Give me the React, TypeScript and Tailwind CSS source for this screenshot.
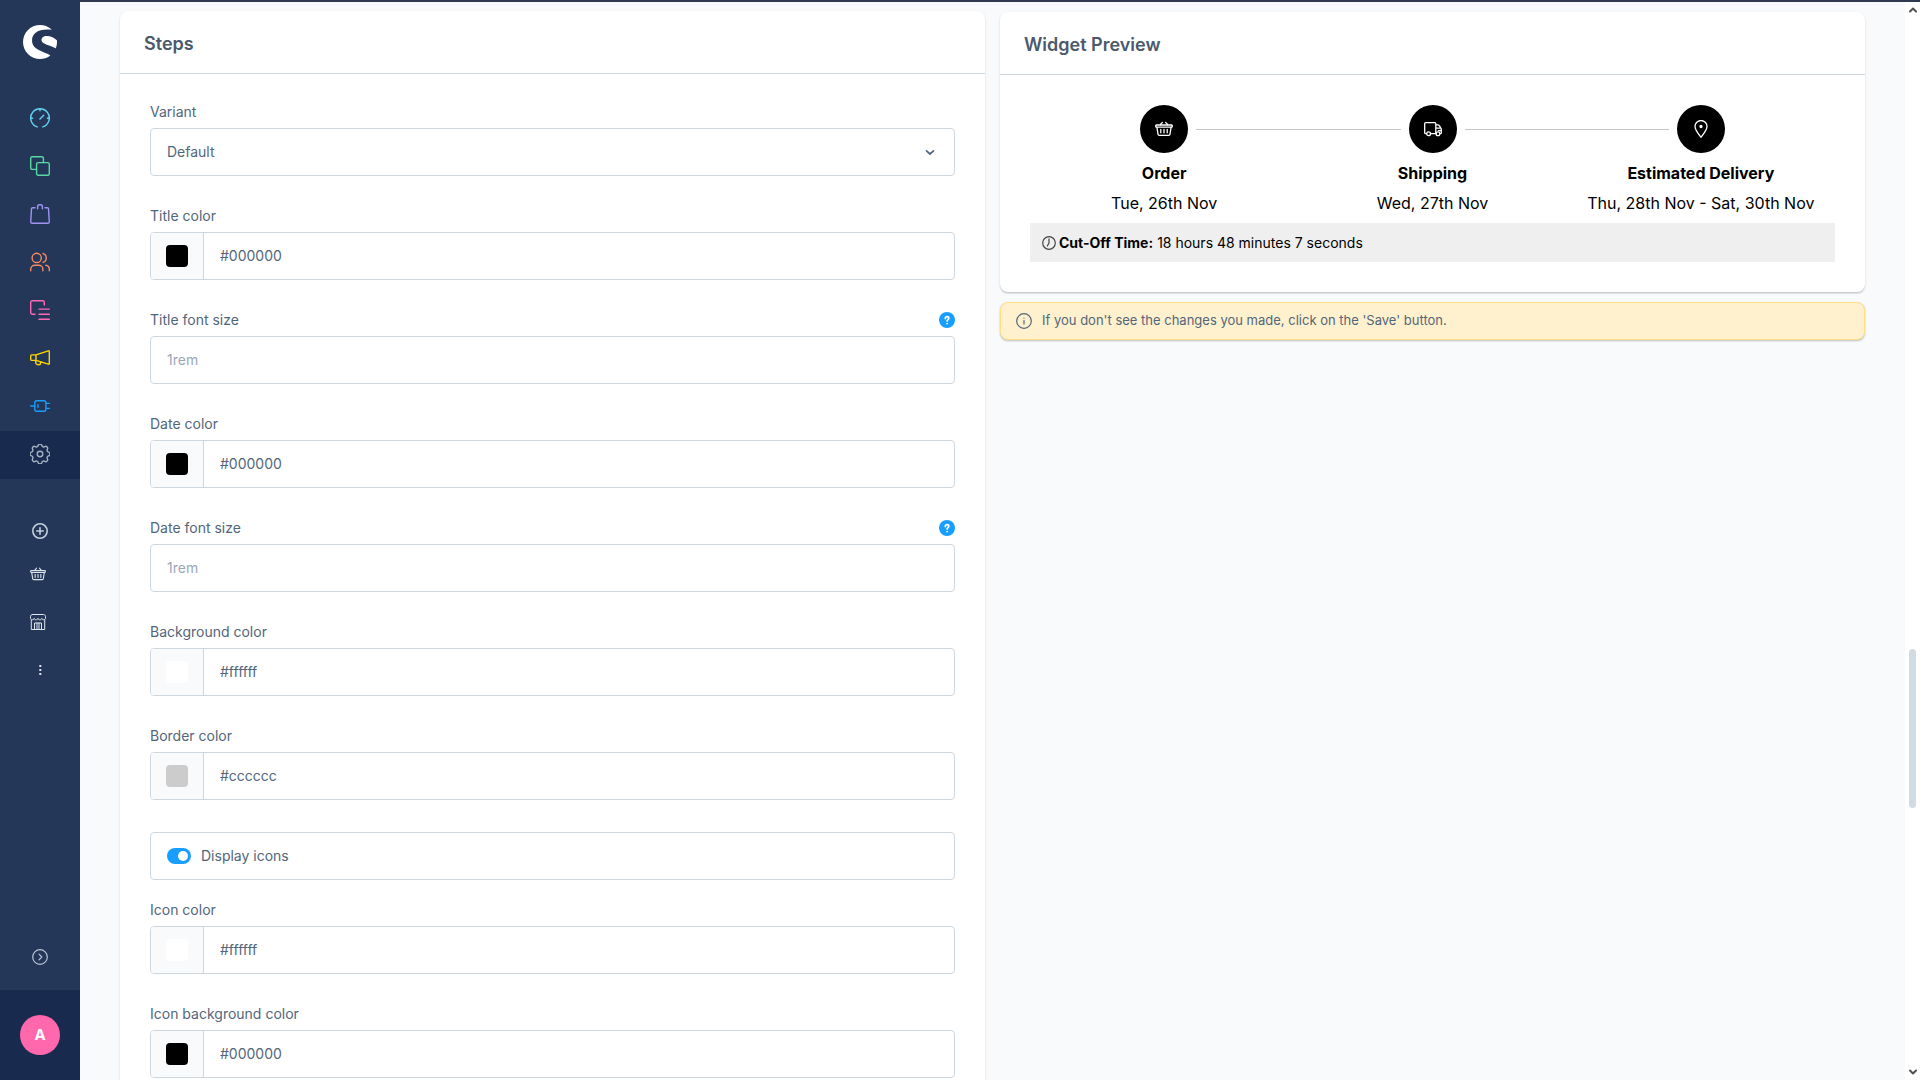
import { useState, type ReactNode } from "react";
import { SiShopware } from "react-icons/si";

function Icon({ children, className = "size-5", stroke = 1.4, box = "0 0 20 20" }: { children: ReactNode; className?: string; stroke?: number; box?: string }) {
  return (
    <svg viewBox={box} className={className} fill="none" stroke="currentColor" strokeWidth={stroke} strokeLinecap="round" strokeLinejoin="round" aria-hidden="true">
      {children}
    </svg>
  );
}

const BasketPaths = () => (
  <>
    <path d="M1.6 5h14.8c.6 0 1 .4.9 1l-.1.5c-.1.400-.4.700-.8.700H1.600c-.4 0-.7-.3-.8-.7L.7 6c-.1-.6.300-1 .9-1Z" />
    <path d="M1.900 7.200 3 14.200c.1.700.6 1.100 1.200 1.100h9.600c.6 0 1.100-.4 1.200-1.100l1.100-7" />
    <path d="M5.200 4.800 7.400 2.400M12.800 4.800l-2.200-2.400M5.800 9.400v3.400M9 9.400v3.400M12.200 9.400v3.400" />
  </>
);

const navItems = [
  {
    label: "Dashboard",
    color: "text-[#64d2f0]",
    icon: <path d="M7.300 18.900A9.300 9.300 0 1 1 12.700 18.900M10 1v1.800M1 10.300h1.600M17.400 10.300H19M10 11l3.700-3.700" />,
  },
  {
    label: "Catalogues",
    color: "text-[#57d9a3]",
    icon: (
      <>
        <path d="M6.500 13.400H2.200A1.500 1.500 0 0 1 .7 11.900V2.200A1.500 1.500 0 0 1 2.200.7h9.700a1.500 1.500 0 0 1 1.500 1.500v4.300" />
        <rect x="6.600" y="6.600" width="12.700" height="12.700" rx="1.500" />
      </>
    ),
  },
  {
    label: "Orders",
    color: "text-[#a092f0]",
    icon: <path d="M5 3.700H2.700c-.7 0-1.200.5-1.200 1.200L.7 17.800c0 .9.600 1.500 1.500 1.500h15.600c.9 0 1.500-.6 1.500-1.500l-.8-12.900c0-.7-.5-1.200-1.200-1.200H15M7.600 4.800V2.700c0-1.100.8-2 1.800-2h1.200c1 0 1.800.9 1.800 2v2.100" />,
  },
  {
    label: "Customers",
    color: "text-[#f88962]",
    icon: (
      <>
        <circle cx="6.700" cy="5.900" r="4.600" />
        <path d="M.7 18.700v-1.500a4 4 0 0 1 4-4h4.200a4 4 0 0 1 4 4v1.500M13 1.500a4.600 4.600 0 0 1 0 8.800M15.800 13.300a4 4 0 0 1 3.500 4v1.400" />
      </>
    ),
  },
  {
    label: "Content",
    color: "text-[#ff68b4]",
    icon: <path d="M5 14.300H2.400A1.700 1.700 0 0 1 .7 12.600V2.400A1.700 1.700 0 0 1 2.400.7h10.200a1.700 1.700 0 0 1 1.700 1.700v2.600M9 9.100h10.300M9 14.200h10.300M9 19.200h10.300" />,
  },
  {
    label: "Marketing",
    color: "text-[#ffd700]",
    icon: <path d="M6 6.900 18.300 2.800c.6-.2 1 .2 1 .7v12c0 .6-.4.900-1 .7L6 12.400M1.700 6.900H6v5.500H1.700c-.6 0-1-.4-1-1V7.900c0-.6.4-1 1-1ZM5.700 12.600v1.800c0 1.100.7 1.900 1.700 2.100l1.200.2c1 .2 1.800-.5 1.900-1.400l.1-1.200" />,
  },
  {
    label: "Extensions",
    color: "text-[#189eff]",
    icon: <path d="M.7 10H4.800M6.500 4.700h7.400a2 2 0 0 1 2 2v6.600a2 2 0 0 1-2 2H6.500a1.700 1.700 0 0 1-1.700-1.700V6.400a1.700 1.700 0 0 1 1.700-1.700ZM16 7.400h3.300M16 12.400h3.300M8 8.700v2.600" />,
  },
  {
    label: "Settings",
    color: "text-[#a3b2c2]",
    active: true,
    icon: (
      <g transform="translate(-3.330 -3.330) scale(1.111)">
        <path strokeWidth="1.250" d="M10.325 4.317c.426-1.756 2.924-1.756 3.350 0a1.724 1.724 0 0 0 2.573 1.066c1.543-.94 3.310.826 2.370 2.370a1.724 1.724 0 0 0 1.065 2.572c1.756.426 1.756 2.924 0 3.350a1.724 1.724 0 0 0-1.066 2.573c.94 1.543-.826 3.310-2.370 2.370a1.724 1.724 0 0 0-2.572 1.065c-.426 1.756-2.924 1.756-3.350 0a1.724 1.724 0 0 0-2.573-1.066c-1.543.94-3.310-.826-2.370-2.370a1.724 1.724 0 0 0-1.065-2.572c-1.756-.426-1.756-2.924 0-3.350a1.724 1.724 0 0 0 1.066-2.573c-.94-1.543.826-3.310 2.370-2.370 1 .608 2.296.070 2.572-1.065Z" />
        <circle cx="12" cy="12" r="2.500" strokeWidth="1.250" />
      </g>
    ),
  },
];

function Sidebar() {
  return (
    <aside className="flex w-20 shrink-0 flex-col bg-[#243758]">
      <a href="#home" aria-label="Home" className="mt-6 flex h-9 items-center justify-center text-white">
        <SiShopware className="size-[34px]" />
      </a>
      <nav aria-label="Main" className="mt-[35px] flex flex-col">
        {navItems.map((n) => (
          <a key={n.label} href={"#" + n.label.toLowerCase()} aria-label={n.label} className={"flex h-12 items-center justify-center pb-0.5 " + n.color + (n.active ? " bg-[#182b4e]" : "")}>
            <Icon>{n.icon}</Icon>
          </a>
        ))}
      </nav>
      <div className="mt-7 flex flex-col">
        <button aria-label="Add" className="flex h-12 items-center justify-center text-[#c3cfdd]">
          <Icon className="size-4" stroke={1.6} box="0 0 16 16">
            <circle cx="8" cy="8" r="7.200" />
            <path d="M8 4.800v6.400M4.800 8h6.400" />
          </Icon>
        </button>
        <a href="#cart" aria-label="Basket" className="flex h-10 items-center pb-0.5 pl-[30px] text-[#dfe5ec]">
          <Icon className="size-4" stroke={1.200} box="0 0 18 18">
            <BasketPaths />
          </Icon>
        </a>
        <a href="#store" aria-label="Storefront" className="mt-1 flex h-12 items-center pb-0.5 pl-[30px] text-[#dfe5ec]">
          <Icon className="size-4" stroke={1} box="0 0 16 16">
            <path d="M2.500.5h11c1.200 0 2 .8 2 2v1.800c0 .9-.8 1.500-1.800 1.500s-1.900-.6-1.900-1.500c0 .9-.9 1.500-1.900 1.500S8 5.200 8 4.300c0 .9-.9 1.500-1.900 1.500s-1.900-.6-1.900-1.500c0 .9-.9 1.500-1.900 1.500S.5 5.200.5 4.300V2.500c0-1.200.8-2 2-2ZM1.300 6v9.500h13.400V6M4.500 15.500V9h7v6.500M7 9v6.500M9 9v6.500" />
          </Icon>
        </a>
        <button aria-label="More" className="flex h-12 items-center justify-center pb-0.5 text-[#dfe5ec]">
          <svg viewBox="0 0 16 16" className="size-4" fill="currentColor" aria-hidden="true">
            <rect x="7.300" y="3" width="2" height="2" />
            <rect x="7.300" y="7" width="2" height="2" />
            <rect x="7.300" y="11" width="2" height="2" />
          </svg>
        </button>
      </div>
      <button aria-label="Expand menu" className="mt-auto flex h-[66px] items-center justify-center text-[#b8c4d3]">
        <Icon className="size-4" stroke={1.200} box="0 0 16 16">
          <circle cx="8" cy="8" r="7.300" />
          <path d="m7 5.200 2.800 2.800L7 10.800" />
        </Icon>
      </button>
      <button aria-label="User menu" className="flex h-[90px] items-center justify-center bg-[#182b4e]">
        <span className="flex size-10 items-center justify-center rounded-full bg-[#ff68ac] text-[15px] font-bold text-white">A</span>
      </button>
    </aside>
  );
}

function HelpBadge({ topic }: { topic: string }) {
  return (
    <button aria-label={"Help: " + topic} className="flex size-4 items-center justify-center rounded-full bg-[#189eff]">
      <Icon className="size-4 text-white" stroke={1.700} box="0 0 16 16">
        <path d="M6.300 6.400c0-1 .8-1.700 1.800-1.700s1.700.6 1.700 1.600c0 1.200-1.700 1.300-1.700 2.700M8.100 11.500v.1" />
      </Icon>
    </button>
  );
}

const box = "flex h-12 items-center rounded border border-[#cdd7e0] bg-white";

function Field({ id, label, help, children }: { id: string; label: string; help?: boolean; children: ReactNode }) {
  return (
    <div className="mb-8">
      <div className="mb-2 flex h-4 items-center justify-between">
        <label htmlFor={id} className="leading-4">{label}</label>
        {help && <HelpBadge topic={label} />}
      </div>
      {children}
    </div>
  );
}

function ColorField({ id, label, value }: { id: string; label: string; value: string }) {
  return (
    <Field id={id} label={label}>
      <div className={box + " overflow-hidden"}>
        <div className="flex w-[53px] items-center justify-center self-stretch border-r border-[#cdd7e0] bg-[#f9fafc]">
          <button aria-label={"Pick " + label.toLowerCase()} className="size-[22px] rounded" style={{ backgroundColor: value }} />
        </div>
        <input id={id} defaultValue={value} className="min-w-0 flex-1 self-stretch px-4 outline-none" />
      </div>
    </Field>
  );
}

function TextField({ id, label, placeholder }: { id: string; label: string; placeholder: string }) {
  return (
    <Field id={id} label={label} help>
      <div className={box}>
        <input id={id} placeholder={placeholder} className="min-w-0 flex-1 self-stretch px-4 outline-none placeholder:text-[#9aa8b8]" />
      </div>
    </Field>
  );
}

const cardShadow = "shadow-[0_1px_1px_rgba(0,0,0,0.08),0_2px_1px_rgba(0,0,0,0.06),0_1px_3px_rgba(0,0,0,0.1)]";

function Card({ title, className = "", children }: { title: string; className?: string; children: ReactNode }) {
  return (
    <section className={"rounded-lg bg-white " + cardShadow + " " + className}>
      <h2 className="flex h-[63px] items-center border-b border-[#cdd7e0] px-6 pb-px pt-1 text-lg font-semibold leading-6 text-[#4a596b]">{title}</h2>
      <div className="p-[30px]">{children}</div>
    </section>
  );
}

function StepsForm() {
  const [icons, setIcons] = useState(true);
  return (
    <Card title="Steps" className="self-start">
      <Field id="variant" label="Variant">
        <div className={box + " pr-[18px]"}>
          <select id="variant" className="min-w-0 flex-1 appearance-none self-stretch px-4 outline-none">
            <option>Default</option>
          </select>
          <Icon className="pointer-events-none size-3" stroke={1.700} box="0 0 12 12">
            <path d="m2.500 4.800 3.500 3.200 3.500-3.200" />
          </Icon>
        </div>
      </Field>
      <ColorField id="title-color" label="Title color" value="#000000" />
      <TextField id="title-size" label="Title font size" placeholder="1rem" />
      <ColorField id="date-color" label="Date color" value="#000000" />
      <TextField id="date-size" label="Date font size" placeholder="1rem" />
      <ColorField id="background-color" label="Background color" value="#ffffff" />
      <ColorField id="border-color" label="Border color" value="#cccccc" />
      <label className={box + " mb-[22px] cursor-pointer gap-2.5 px-4"}>
        <input
          type="checkbox"
          checked={icons}
          onChange={(e) => setIcons(e.target.checked)}
          className="h-4 w-6 appearance-none rounded-full bg-[#c2ccd6] p-[3px] before:block before:size-2.5 before:rounded-full before:bg-white checked:bg-[#189eff] checked:before:ml-2"
        />
        Display icons
      </label>
      <ColorField id="icon-color" label="Icon color" value="#ffffff" />
      <ColorField id="icon-background" label="Icon background color" value="#000000" />
    </Card>
  );
}

const steps = [
  { title: "Order", date: "Tue, 26th Nov", icon: <BasketPaths /> },
  {
    title: "Shipping",
    date: "Wed, 27th Nov",
    icon: (
      <>
        <path d="M2.600 13.700H1.700c-.6 0-1-.4-1-1V3.600c0-.6.4-1 1-1h9.100c.6 0 1 .4 1 1v10.100M6.700 13.700h5M11.800 4.800h2.100c.6 0 1.100.3 1.400.8l1.600 2.500c.3.400.4.800.4 1.200v3.400c0 .6-.4 1-1 1M12 8.200h4.700M14.300 10.700h2.900" />
        <circle cx="4.600" cy="13.800" r="1.900" />
        <circle cx="14" cy="13.800" r="1.900" />
      </>
    ),
  },
  {
    title: "Estimated Delivery",
    date: "Thu, 28th Nov - Sat, 30th Nov",
    icon: (
      <>
        <path d="M9 17.300C5.800 13.200 3 9.800 3 6.500a6 6 0 0 1 12 0c0 3.300-2.800 6.700-6 10.800Z" />
        <circle cx="9" cy="6.500" r="1" fill="currentColor" />
      </>
    ),
  },
];

function WidgetPreview() {
  return (
    <div className="mt-px flex flex-col gap-2.5 self-start">
      <Card title="Widget Preview">
        <ol className="grid grid-cols-3 text-base leading-6 text-black">
          {steps.map((s, i) => (
            <li key={s.title} className="flex flex-col items-center">
              <div className="flex items-center gap-2 self-stretch">
                <div className={"h-px flex-1" + (i > 0 ? " bg-[#c4c4c4]" : "")} />
                <div className="flex size-12 items-center justify-center rounded-full bg-black text-white">
                  <Icon className="size-[18px]" stroke={1.300} box="0 0 18 18">{s.icon}</Icon>
                </div>
                <div className={"h-px flex-1" + (i < steps.length - 1 ? " bg-[#c4c4c4]" : "")} />
              </div>
              <strong className="mt-2 font-bold">{s.title}</strong>
              <span className="mt-1.5">{s.date}</span>
            </li>
          ))}
        </ol>
        <p className="mt-2 flex h-[39px] items-center bg-[#efefef] px-3 text-black">
          <Icon className="mr-[3px] size-3.5 text-[#444]" stroke={1.200} box="0 0 14 14">
            <circle cx="7" cy="7" r="6.300" />
            <path d="M7 2.800V7L5.300 10" />
          </Icon>
          <strong className="mr-1 font-bold">Cut-Off Time:</strong>
          18 hours 48 minutes 7 seconds
        </p>
      </Card>
      <div role="status" className="flex h-[38px] items-center gap-2.5 rounded-lg border border-[#ffdf85] bg-[#fff1cd] px-[15px] pb-px text-[13px] shadow-[0_1px_2px_rgba(0,0,0,0.25)]">
        <Icon className="size-4 text-[#52667a]" stroke={1.200} box="0 0 16 16">
          <circle cx="8" cy="8" r="7.300" />
          <path d="M8 7.500V11M8 5v.1" />
        </Icon>
        If you don't see the changes you made, click on the 'Save' button.
      </div>
    </div>
  );
}

function ScrollStrip() {
  return (
    <div className="flex w-[15px] shrink-0 flex-col items-center bg-white py-1 text-[#505050]" aria-hidden="true">
      <Icon className="size-2" stroke={2} box="0 0 8 8">
        <path d="m1 5.500 3-3 3 3" />
      </Icon>
      <div className="grow-[634]" />
      <div className="w-[7px] grow-[158] rounded-full bg-[#d1dbe4]" />
      <div className="grow-[260]" />
      <Icon className="size-2" stroke={2} box="0 0 8 8">
        <path d="m1 2.500 3 3 3-3" />
      </Icon>
    </div>
  );
}

export default function App() {
  return (
    <div className="flex h-screen overflow-hidden bg-[#f9fafc] font-['Inter',sans-serif] text-sm text-[#52667a]">
      <Sidebar />
      <div className="flex min-w-0 flex-1 flex-col border-t-2 border-[#2f3a50]">
        <div className="flex min-h-0 flex-1">
          <main className="grid min-w-0 flex-1 grid-cols-2 gap-[15px] overflow-hidden px-10 pt-[9px]">
            <StepsForm />
            <WidgetPreview />
          </main>
          <ScrollStrip />
        </div>
      </div>
    </div>
  );
}
